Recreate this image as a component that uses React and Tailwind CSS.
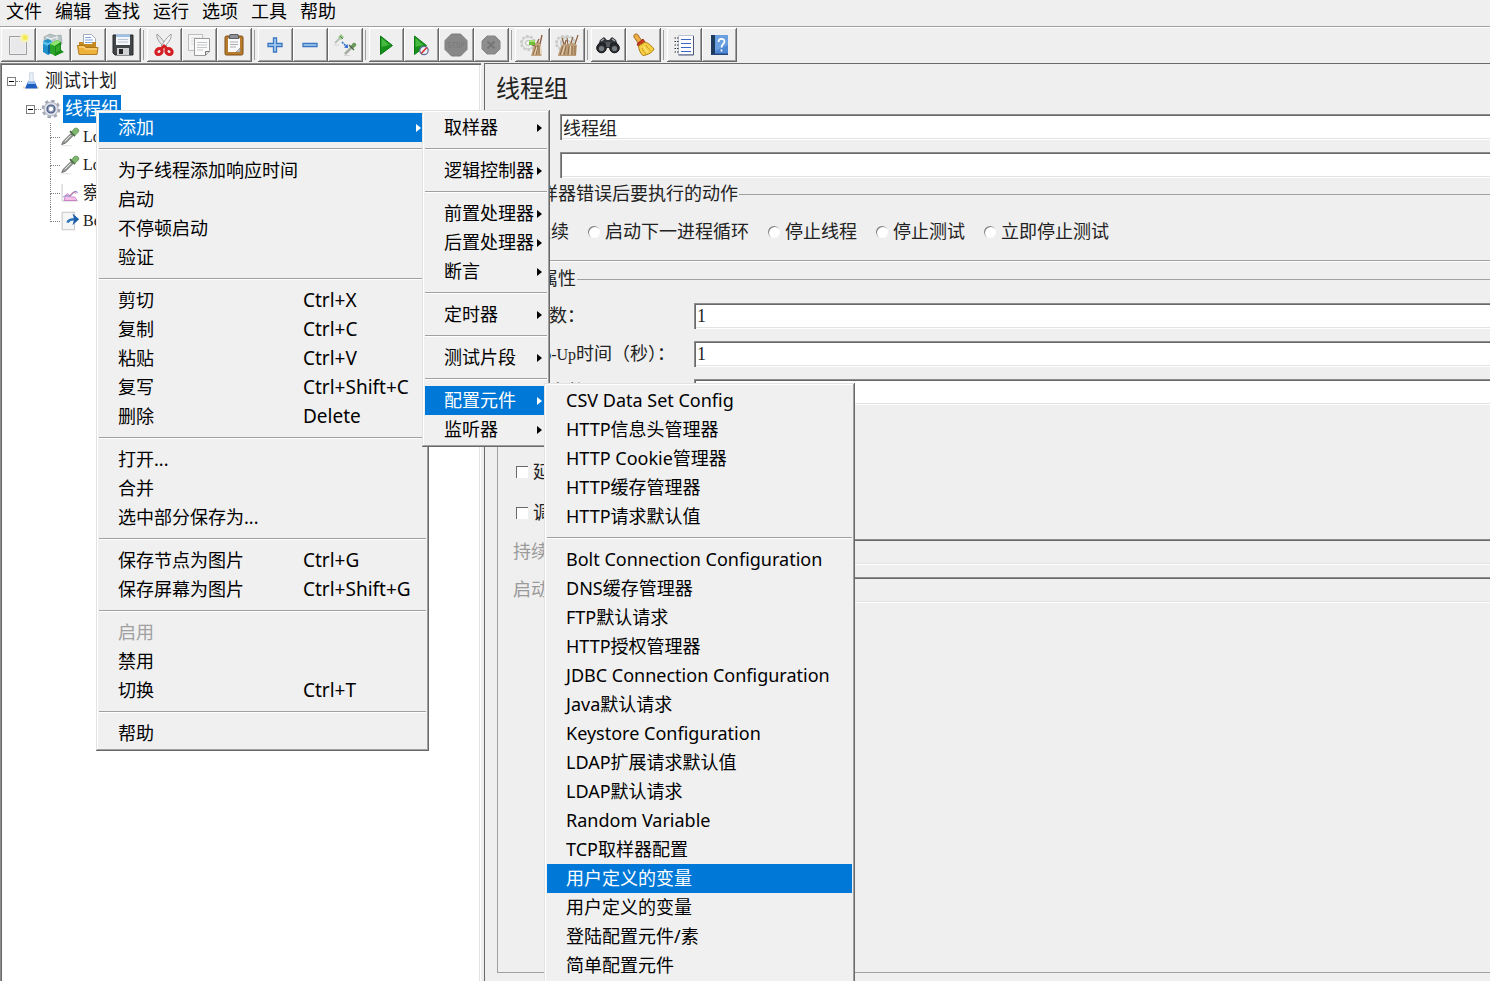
import React from "react";

const BEVEL_UP =
  "shadow-[inset_-1px_-1px_0_#696969,inset_1px_1px_0_#e3e3e3,inset_-2px_-2px_0_#a0a0a0,inset_2px_2px_0_#ffffff]";
const BEVEL_IN =
  "shadow-[inset_1px_1px_0_#8c8c8c,inset_2px_2px_0_#696969,inset_-1px_-1px_0_#ffffff,inset_-2px_-2px_0_#e3e3e3]";

const UI_FONT = "font-['Noto_Sans','Noto_Sans_CJK_SC',sans-serif]";
const FORM_FONT = "font-['Liberation_Serif','Noto_Sans_CJK_SC',serif]";

function Svg({ children, size = "size-6" }) {
  return (
    <svg viewBox="0 0 24 24" className={`${size} shrink-0`} fill="none" aria-hidden="true">
      {children}
    </svg>
  );
}

function Gauge({ x = 0 }) {
  return (
    <g transform={`translate(${x} 0)`}>
      <circle cx="8" cy="10" r="7" stroke="#c9cbc9" strokeWidth="2" strokeDasharray="2.600 1.800" />
      <circle cx="8" cy="10" r="6" fill="#eceeec" stroke="#c3c6c3" />
      <circle cx="8" cy="10" r="2.400" fill="#f8f8f8" stroke="#b5b5b5" />
    </g>
  );
}

const icons = {
  new: (
    <Svg>
      <path d="M3.500 3.500h17v18h-17z" fill="#f1f1f1" stroke="#9d9d9d" />
      <path d="M5 5h14v15H5z" fill="#e9e9ec" />
      <circle cx="18.500" cy="5" r="4.500" fill="#f6f3b0" />
      <circle cx="19" cy="4.500" r="2.500" fill="#f3ec55" />
    </Svg>
  ),
  templates: (
    <Svg>
      <path d="M3 4l6-3 6 2 5-1 1 9-9 3-8-3z" fill="#b9c4c6" stroke="#8fa0a2" strokeWidth=".7" />
      <path d="M5 4l5 2v5M10 6l6-2M16 3v7" stroke="#f3f7f7" />
      <path d="M2 8l5-2 4 2v12l-4 2-5-3z" fill="#1d8fc9" />
      <path d="M2 8l5 2 4-2v3l-4 2-5-2z" fill="#5fc0ea" />
      <path d="M7 12v9l3-2v-8z" fill="#0c659d" />
      <path d="M9 11l7-4 4 2v8l3 2-9 4-5-3z" fill="#29a329" />
      <path d="M9 11l5 2 6-4-4-2z" fill="#8de36c" />
      <path d="M14 13v10l8-4-2-2V9z" fill="#178a17" />
      <path d="M16 13v6M18 12v6" stroke="#4fc63f" />
    </Svg>
  ),
  open: (
    <Svg>
      <path d="M7.500 1.500h8l4 4v10h-12z" fill="#fff" stroke="#8f98a8" strokeWidth=".8" />
      <path d="M9 4.500h6M9 7h8M9 9.500h8" stroke="#7fa5dc" />
      <path d="M3 9h4l1 2h8l1-2h3v11H3z" fill="#c58a1f" />
      <path d="M1.500 12.500h7l1.500 2h12l-1 7h-18z" fill="#eeb23a" stroke="#a8711a" strokeWidth=".9" />
      <path d="M3 14h5l1.500 2H21" stroke="#ffe09a" />
    </Svg>
  ),
  save: (
    <Svg>
      <path d="M2 2h20v20H4l-2-2z" fill="#434649" stroke="#26282a" />
      <path d="M5 1.500h14V12H5z" fill="#f4f6f8" />
      <path d="M5 1.500h14v2.500H5z" fill="#9cc0e6" />
      <path d="M7 6.500h10M7 9h10" stroke="#b9c5d2" />
      <path d="M6 15h12v7H6z" fill="#cfd1d3" />
      <path d="M8 16h4v5H8z" fill="#242628" />
    </Svg>
  ),
  cut: (
    <Svg>
      <path d="M5 1c-1 5 3 9 8 14l2-2C12 9 9 4 5 1z" fill="#e6e6e6" stroke="#8a8a8a" strokeWidth=".8" />
      <path d="M19 1c1 5-3 9-8 14l-2-2c3-4 6-9 10-12z" fill="#f5f5f5" stroke="#8a8a8a" strokeWidth=".8" />
      <ellipse cx="7" cy="18.500" rx="3.300" ry="2.800" transform="rotate(-40 7 18.500)" stroke="#d41f24" strokeWidth="3.200" />
      <ellipse cx="17" cy="18.500" rx="3.300" ry="2.800" transform="rotate(40 17 18.500)" stroke="#d41f24" strokeWidth="3.200" />
      <path d="M9 16l3-3 3 3" stroke="#d41f24" strokeWidth="3" />
    </Svg>
  ),
  copy: (
    <Svg>
      <path d="M1.500 1.500h14v16h-14z" fill="#f6f6f6" stroke="#bdbdbd" />
      <path d="M4 5h9M4 8h3M4 11h3" stroke="#d8d8d8" />
      <path d="M7.500 5.500h15v13l-4 4h-11z" fill="#fbfbfb" stroke="#9a9a9a" />
      <path d="M18.500 22v-3.500h4" stroke="#777" fill="#ddd" />
      <path d="M10 9.500h10M10 12h10M10 14.500h10M10 17h6" stroke="#c3c7cc" />
    </Svg>
  ),
  paste: (
    <Svg>
      <rect x="3" y="3" width="18" height="19" rx="1.500" fill="#b97c2c" stroke="#7c4f16" />
      <path d="M6 5h12v14H6z" fill="#fafafa" />
      <path d="M8 1.500h8l1 4H7z" fill="#8d9094" stroke="#45484c" strokeWidth=".8" />
      <path d="M8 9h8M8 11.500h8M8 14h6" stroke="#a9adb2" />
      <path d="M14 19l4-4v4z" fill="#c9c9c9" stroke="#888" strokeWidth=".6" />
    </Svg>
  ),
  plus: (
    <Svg>
      <path d="M10.500 5h3v5.500H19v3h-5.500V19h-3v-5.500H5v-3h5.500z" fill="#a9d0f2" stroke="#3a76c2" strokeWidth="1.300" />
    </Svg>
  ),
  minus: (
    <Svg>
      <path d="M5 10.500h14v3H5z" fill="#a9d0f2" stroke="#3a76c2" strokeWidth="1.300" />
    </Svg>
  ),
  toggle: (
    <Svg>
      <path d="M2 10l5-5" stroke="#b9c1b6" strokeWidth="2" />
      <path d="M5 4l3-3 3 3-3 3z" fill="#a0cc92" />
      <path d="M7 3l3 3" stroke="#5f7d55" />
      <path d="M9 9l4 4" stroke="#2a6fd0" strokeWidth="1.500" strokeDasharray="2 1" />
      <path d="M15 15l-4-.5 3.500-3.500z" fill="#2060d0" />
      <path d="M12 21l6-6" stroke="#a5ada2" strokeWidth="2.500" />
      <path d="M17 14l3-4c2-1 4 1 3 3l-4 3z" fill="#6c9a5c" />
      <path d="M16 12l5 5" stroke="#4a5f44" strokeWidth="1.300" />
      <path d="M1 12h5M11 22.500h6" stroke="#d5d5d5" />
    </Svg>
  ),
  start: (
    <Svg>
      <path d="M6.500 3l12 9.500-12 9z" fill="#15901a" stroke="#0c7a12" />
      <path d="M7.500 5l8 7-8 2z" fill="#45b840" />
    </Svg>
  ),
  startNoTimers: (
    <Svg>
      <path d="M5.500 3l12 9.500-12 9z" fill="#15901a" stroke="#0c7a12" />
      <path d="M6.500 5l8 7-8 2z" fill="#45b840" />
      <circle cx="15" cy="17.500" r="4.200" fill="#eef1f6" stroke="#5d6f9c" strokeWidth="1.200" />
      <path d="M12.200 20.500l5.600-6" stroke="#d0312d" strokeWidth="1.500" />
    </Svg>
  ),
  stop: (
    <Svg>
      <path d="M7.500 1h9L23 7.500v9L16.500 23h-9L1 16.500v-9z" fill="#888" stroke="#7e7e7e" />
      <path d="M4 9.500h3M4 9.500V12h3v2.500H4M8.500 9.500h3M10 9.500v5M13 9.500h2.500v5H13zM17.500 15V9.500H20V12h-2" stroke="#7d7d7d" />
    </Svg>
  ),
  shutdown: (
    <Svg>
      <path d="M8 3h8l5 5v8l-5 5H8l-5-5V8z" fill="#8d8d8d" stroke="#858585" />
      <path d="M8.500 8.500l7 7M15.500 8.500l-7 7" stroke="#767676" strokeWidth="2" />
    </Svg>
  ),
  clear: (
    <Svg>
      <Gauge />
      <path d="M11 23l2-8 2-5 4-1 2 3 .5 11z" fill="#c3a57f" />
      <path d="M22 2l-2 9M17 10l2-4M15 13l-5-2" stroke="#8a5a3a" strokeWidth="1.300" />
      <path d="M13 22l3-9M16 22l2-10M19 22l0-9" stroke="#8f6c48" />
      <path d="M14.500 22l2.500-8M20.500 21V13" stroke="#e9d8bc" />
      <path d="M9 7h6v5H9z" fill="#6fbf34" />
      <path d="M9 7h6v2H9z" fill="#a8de78" />
    </Svg>
  ),
  clearAll: (
    <Svg>
      <Gauge />
      <Gauge x={5} />
      <path d="M3 22l3-9 3-3 4 2 3-3 4 2 2 1-1 11H3z" fill="#bd9f79" />
      <path d="M9 11L7 5M13 12l-1-7M16 10l2-6M20 11l3-9M10 11l1-4" stroke="#8a5f3c" strokeWidth="1.200" />
      <path d="M5 22l3-9M9 22l2-9M13 22l1-9M17 22v-9M20 22v-9" stroke="#8f6c48" />
      <path d="M7 22l2.500-9M15 22l.5-9" stroke="#e9d8bc" />
    </Svg>
  ),
  search: (
    <Svg>
      <path d="M4 7l4-3 3 3h2l3-3 4 3 3 8H1z" fill="#34363a" />
      <path d="M5 8l3-2M16 6l3 2" stroke="#a5a8ad" strokeWidth="1.500" />
      <circle cx="5.500" cy="15" r="4.800" fill="#2b2d30" stroke="#121314" />
      <circle cx="18.500" cy="15" r="4.800" fill="#2b2d30" stroke="#121314" />
      <circle cx="5.500" cy="15.500" r="2.600" fill="#747b83" />
      <circle cx="18.500" cy="15.500" r="2.600" fill="#747b83" />
      <path d="M10 9h4v5h-4z" fill="#55585c" />
    </Svg>
  ),
  searchReset: (
    <Svg>
      <path d="M3 4c-1-3 3-4 4-2l4 6-4 2z" fill="#eeb045" stroke="#9b5f16" strokeWidth=".9" />
      <path d="M6 11l6-5 2 3-7 4z" fill="#cf3a20" stroke="#8e2615" strokeWidth=".8" />
      <path d="M7.500 13L14 9c3 1 6 3 9 7-1 3-6 6-11 6.500-3-2-4-6-4.500-9.500z" fill="#f6cf42" stroke="#ad7d14" strokeWidth="1" />
      <path d="M11 15c1 3 2 4 4 6M15 12c1 3 3 4 5 6" stroke="#d19f27" />
      <path d="M13 14c1 2 2 4 4 5" stroke="#fff0a8" />
    </Svg>
  ),
  functions: (
    <Svg>
      <path d="M6.500 2.500h15v19h-15z" fill="#fcfcff" stroke="#b9c0d4" />
      <path d="M21.500 3v19h-15" stroke="#4b5678" />
      <path d="M9 6.500h10M9 10.500h10M9 14.500h10M9 18.500h10" stroke="#3a66c4" strokeWidth="1.200" />
      <path d="M2.500 5h4.500M2.500 8.500h4.500M2.500 12h4.500M2.500 15.500h4.500M2.500 19h4.500" stroke="#333" strokeWidth="1.200" strokeDasharray="1.500 1" />
    </Svg>
  ),
  help: (
    <Svg>
      <path d="M4 2h17v20H4z" fill="#4f88d2" />
      <path d="M4 2h4v20H4z" fill="#1f3a5f" />
      <path d="M8 2h13v10L8 18z" fill="#6a9fe0" />
      <path d="M4 22l2-1.500h15V22z" fill="#22467c" />
      <path d="M11.500 9c0-4 6-4 6-.5 0 2.500-3 2.500-3 6M14.500 16.500v2" stroke="#fff" strokeWidth="1.700" />
    </Svg>
  ),
};

const toolGroups = [
  [["new", "新建"], ["templates", "模板"], ["open", "打开"], ["save", "保存"]],
  [["cut", "剪切"], ["copy", "复制"], ["paste", "粘贴"]],
  [["plus", "展开"], ["minus", "收起"], ["toggle", "切换"]],
  [["start", "启动"], ["startNoTimers", "不停顿启动"], ["stop", "停止"], ["shutdown", "关闭"]],
  [["clear", "清除"], ["clearAll", "清除全部"]],
  [["search", "查找"], ["searchReset", "重置查找"]],
  [["functions", "函数助手"], ["help", "帮助"]],
];

function MenuBar() {
  return (
    <nav className="flex h-[26px] shrink-0 items-center gap-[13px] pb-1 pl-1.5 text-lg leading-6">
      {["文件", "编辑", "查找", "运行", "选项", "工具", "帮助"].map((m) => (
        <button key={m} type="button">{m}</button>
      ))}
    </nav>
  );
}

function Toolbar() {
  return (
    <div className="flex h-[37px] shrink-0 border-t border-[#a0a0a0] py-px pl-px shadow-[inset_0_1px_0_#ffffff]">
      {toolGroups.map((group, i) => (
        <div key={group[0][0]} className="flex">
          {i > 0 && <div className="my-0.5 mr-[3px] ml-0.5 w-px bg-[#a0a0a0]" />}
          {group.map(([id, label]) => (
            <button
              key={id}
              type="button"
              aria-label={label}
              className="flex h-[34px] w-[35px] items-center justify-center pr-0.5 shadow-[inset_-1px_-1px_0_#696969,inset_1px_1px_0_#ffffff,inset_-2px_-2px_0_#a0a0a0]"
            >
              {icons[id]}
            </button>
          ))}
        </div>
      ))}
    </div>
  );
}

const Flask = () => (
  <Svg size="size-[18px]">
    <path d="M10 1h5v8l5 12H5l5-12z" fill="#e8eef7" stroke="#c5cddA" />
    <path d="M8 13h9l4 9H4z" fill="#1c5fc0" />
    <path d="M8 13h9l1 3H7z" fill="#8fbcf0" />
    <path d="M2.500 19v3M21.500 19v3" stroke="#e8b45c" />
  </Svg>
);

const Gear = () => (
  <Svg size="size-5">
    <circle cx="12" cy="12" r="9.500" stroke="#a3a8b4" strokeWidth="3.500" strokeDasharray="4 3.460" />
    <circle cx="12" cy="12" r="8.500" fill="#dde0e8" stroke="#a3a9b8" />
    <circle cx="12" cy="12" r="4.800" fill="#8d9ab8" stroke="#45557c" strokeWidth="1.400" />
    <circle cx="12" cy="12" r="2.600" fill="#fff" />
  </Svg>
);

const Dropper = () => (
  <Svg size="size-5">
    <path d="M2 22.500h12" stroke="#dcdcdc" />
    <path d="M2 21l2-4 9-9 2.500 2.500-9 9z" fill="#9b9f9b" stroke="#5a5e5a" />
    <path d="M6 17l7-7" stroke="#eef1ee" strokeWidth="1.200" />
    <path d="M12 5l6 6" stroke="#3d5a36" strokeWidth="2" />
    <path d="M14 6l3-4c3-2 7 1 5 4l-4 4z" fill="#7db66c" stroke="#5b8f4d" />
  </Svg>
);

const Graph = () => (
  <Svg size="size-5">
    <path d="M2.500 1v20.500H22" stroke="#bdbdbd" />
    <path d="M5 21c1-5 2-8 4-8s3 4 5 4 4-2 6 4z" fill="#f4c0e6" stroke="#c06fc0" />
    <path d="M4 17c4-5 6 2 10-3 2-3 5-6 7-2" stroke="#8790cf" strokeWidth="1.300" />
    <path d="M12 16c2-5 6-7 7-3" stroke="#d9577f" />
  </Svg>
);

const PostArrow = () => (
  <Svg size="size-5">
    <path d="M2.500 1.500h15v21h-15z" fill="#f6f6f6" stroke="#bcbcbc" />
    <path d="M9 14c1-3 4-4 9-4" stroke="#2c73bb" strokeWidth="3" />
    <path d="M15 3l8 7-8 7 2-7z" fill="#1c5fa8" />
  </Svg>
);

function Expander({ label }) {
  return (
    <button
      type="button"
      aria-label={label}
      className="flex size-[9px] shrink-0 items-center justify-center border border-[#808080] bg-white"
    >
      <span className="h-px w-[5px] bg-black" />
    </button>
  );
}

const leaves = [
  { name: "Lo", latin: true, icon: <Dropper /> },
  { name: "Lo", latin: true, icon: <Dropper /> },
  { name: "察", icon: <Graph /> },
  { name: "Be", latin: true, icon: <PostArrow /> },
];

function Tree() {
  return (
    <aside className={`-mb-1 w-[481px] shrink-0 bg-white pt-1 pl-[7px] text-lg leading-7 text-[#222] ${BEVEL_IN}`}>
      <ul>
        <li>
          <div className="flex h-7 items-center">
            <Expander label="测试计划" />
            <span className="w-[6px] border-t border-dotted border-[#808080]" />
            <Flask />
            <span className="ml-[5px]">测试计划</span>
          </div>
          <ul className="pl-[19px]">
            <li>
              <div className="flex h-7 items-center">
                <Expander label="线程组" />
                <span className="w-[6px] border-t border-dotted border-[#808080]" />
                <Gear />
                <span className="ml-0.5 bg-[#0078d7] px-0.5 text-white">线程组</span>
              </div>
              <ul className="pl-6">
                {leaves.map(({ name, latin, icon }, i) => (
                  <li key={i} className="flex h-7 items-center">
                    <div className="flex h-full w-2.5 flex-col">
                      <span className="flex-1 border-b border-l border-dotted border-[#808080]" />
                      <span className={i < 3 ? "flex-1 border-l border-dotted border-[#808080]" : "flex-1"} />
                    </div>
                    {icon}
                    <span className={latin ? "ml-[3px] text-base leading-7" : "ml-[3px]"}>{name}</span>
                  </li>
                ))}
              </ul>
            </li>
          </ul>
        </li>
      </ul>
    </aside>
  );
}

function Field({ id, label, value, labelWidth = "w-[181px]", disabled = false }) {
  return (
    <div className="flex h-[26px] items-center">
      <label htmlFor={id} className={`${labelWidth} shrink-0 whitespace-nowrap ${disabled ? "text-[#9a9a9a]" : ""}`}>
        {label}
      </label>
      <input
        id={id}
        defaultValue={value}
        disabled={disabled}
        className={`h-full min-w-0 flex-1 px-[3px] outline-none ${disabled ? "bg-[#efefef]" : "bg-white"} ${BEVEL_IN}`}
      />
    </div>
  );
}

function Check({ label }) {
  return (
    <label className="flex h-7 items-center gap-[5px] pl-[3px]">
      <input type="checkbox" className="size-3 appearance-none bg-white shadow-[inset_1px_1px_0_#696969]" />
      {label}
    </label>
  );
}

const actions = ["继续", "启动下一进程循环", "停止线程", "停止测试", "立即停止测试"];

function ThreadGroup() {
  return (
    <main className="-mr-1 flex min-w-0 flex-1 flex-col border-t border-l border-[#696969] pl-3 text-lg leading-7 text-[#222]">
      <h1 className="-ml-px mt-[9px] text-2xl leading-8">线程组</h1>
      <div className="mt-[9px] flex flex-col gap-3">
        <Field id="name" label="名称：" value="线程组" labelWidth="w-[63px]" />
        <Field id="comment" label="注释：" value="" labelWidth="w-[63px]" />
      </div>

      <fieldset className="mt-0.5 h-[81px] min-w-0 shrink-0 border border-r-0 border-[#a0a0a0] pl-[18px] shadow-[0_1px_0_#ffffff]">
        <legend className="-ml-[13px] px-px">在取样器错误后要执行的动作</legend>
        <div className="flex h-12 items-center gap-[19px] whitespace-nowrap">
          {actions.map((a) => (
            <label key={a} className="flex items-center gap-[5px]">
              <input
                type="radio"
                name="on-error"
                className="size-3 appearance-none rounded-full bg-white shadow-[inset_1px_1px_0_#808080]"
              />
              {a}
            </label>
          ))}
        </div>
      </fieldset>

      <fieldset className="mt-1 mb-2 min-w-0 flex-1 border border-r-0 border-[#a0a0a0] pl-[15px]">
        <legend className="-ml-[10px] px-px">线程属性</legend>
        <div className="mt-2.5 flex flex-col gap-3">
          <Field id="threads" label="线程数：" value="1" />
          <Field id="ramp" label={<><span className="text-base">Ramp-Up</span>时间（秒）：</>} value="1" />
          <Field id="loops" label="循环次数" value="" />
        </div>
        <div className="mt-[53px] flex flex-col gap-[13px]">
          <Check label="延迟创建线程直到需要" />
          <Check label="调度器" />
        </div>
        <div className="mt-3 flex flex-col gap-3">
          <Field id="duration" label="持续时间（秒）" value="" disabled />
          <Field id="delay" label="启动延迟（秒）" value="" disabled />
        </div>
      </fieldset>
    </main>
  );
}

const contextMenu = [
  [{ t: "添加", on: true, sub: true }],
  [{ t: "为子线程添加响应时间" }, { t: "启动" }, { t: "不停顿启动" }, { t: "验证" }],
  [
    { t: "剪切", k: "Ctrl+X" },
    { t: "复制", k: "Ctrl+C" },
    { t: "粘贴", k: "Ctrl+V" },
    { t: "复写", k: "Ctrl+Shift+C" },
    { t: "删除", k: "Delete" },
  ],
  [{ t: "打开..." }, { t: "合并" }, { t: "选中部分保存为..." }],
  [{ t: "保存节点为图片", k: "Ctrl+G" }, { t: "保存屏幕为图片", k: "Ctrl+Shift+G" }],
  [{ t: "启用", off: true }, { t: "禁用" }, { t: "切换", k: "Ctrl+T" }],
  [{ t: "帮助" }],
];

const addMenu = [
  [{ t: "取样器", sub: true }],
  [{ t: "逻辑控制器", sub: true }],
  [{ t: "前置处理器", sub: true }, { t: "后置处理器", sub: true }, { t: "断言", sub: true }],
  [{ t: "定时器", sub: true }],
  [{ t: "测试片段", sub: true }],
  [{ t: "配置元件", sub: true, on: true }, { t: "监听器", sub: true }],
];

const configMenu = [
  [
    { t: "CSV Data Set Config" },
    { t: "HTTP信息头管理器" },
    { t: "HTTP Cookie管理器" },
    { t: "HTTP缓存管理器" },
    { t: "HTTP请求默认值" },
  ],
  [
    { t: "Bolt Connection Configuration" },
    { t: "DNS缓存管理器" },
    { t: "FTP默认请求" },
    { t: "HTTP授权管理器" },
    { t: "JDBC Connection Configuration" },
    { t: "Java默认请求" },
    { t: "Keystore Configuration" },
    { t: "LDAP扩展请求默认值" },
    { t: "LDAP默认请求" },
    { t: "Random Variable" },
    { t: "TCP取样器配置" },
    { t: "用户定义的变量", on: true },
    { t: "用户定义的变量" },
    { t: "登陆配置元件/素" },
    { t: "简单配置元件" },
  ],
];

function Menu({ groups, place }) {
  return (
    <div role="menu" className={`absolute overflow-hidden bg-[#f0f0f0] p-[3px] text-lg ${UI_FONT} ${BEVEL_UP} ${place}`}>
      {groups.map((items, g) => (
        <div key={g}>
          {g > 0 && <hr className="my-1.5 h-0.5 border-t border-b border-t-[#a0a0a0] border-b-white" />}
          {items.map((it, i) => (
            <button
              key={i}
              type="button"
              role="menuitem"
              disabled={it.off}
              className={`relative flex h-[29px] w-full items-center pl-[19px] text-left leading-[29px] whitespace-nowrap ${
                it.on ? "bg-[#0078d7] text-white" : it.off ? "text-[#a0a0a0]" : "text-black"
              }`}
            >
              <span className={it.k ? "w-[185px]" : ""}>{it.t}</span>
              {it.k && <span className="text-[19px]">{it.k}</span>}
              {it.sub && (
                <svg viewBox="0 0 5 8" className="absolute right-[5px] h-2 w-[5px]" aria-hidden="true">
                  <path d="M0 0l5 4-5 4z" fill="currentColor" />
                </svg>
              )}
            </button>
          ))}
        </div>
      ))}
    </div>
  );
}

export default function App() {
  return (
    <div className={`relative flex h-screen flex-col overflow-hidden bg-[#efefef] text-black ${UI_FONT}`}>
      <MenuBar />
      <Toolbar />
      <div className={`flex min-h-0 flex-1 gap-[3px] ${FORM_FONT}`}>
        <Tree />
        <ThreadGroup />
      </div>
      <Menu groups={contextMenu} place="top-[110px] left-[96px] w-[333px]" />
      <Menu groups={addMenu} place="top-[110px] left-[422px] w-[128px]" />
      <Menu groups={configMenu} place="top-[383px] -bottom-1 left-[544px] w-[311px]" />
    </div>
  );
}
